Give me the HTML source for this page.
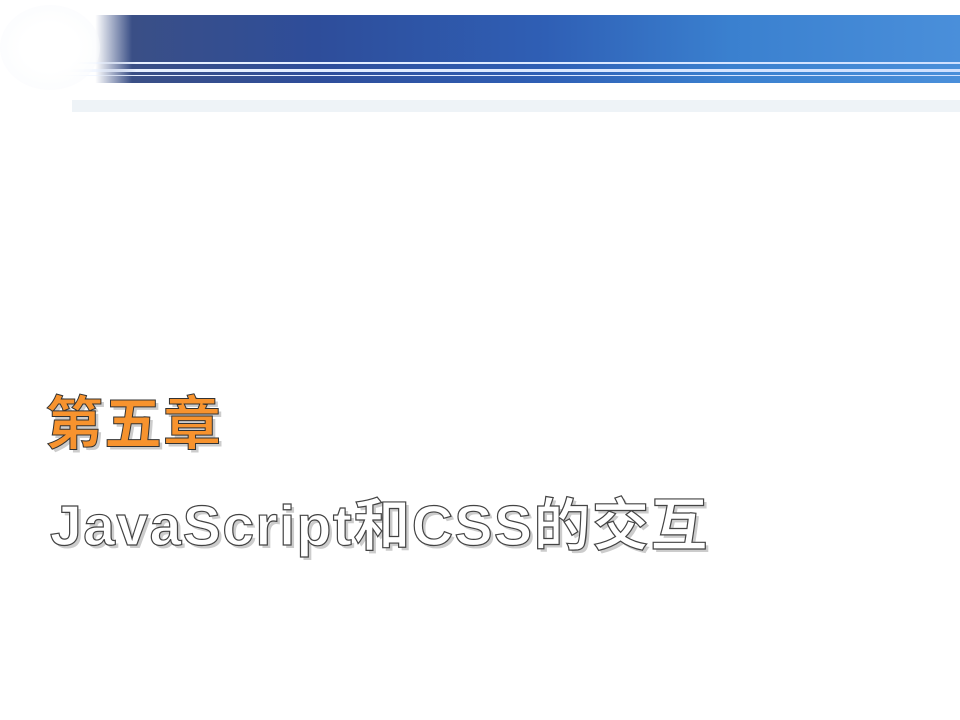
<!DOCTYPE html>
<html><head><meta charset="utf-8"><style>
body{margin:0;width:960px;height:720px;background:#fff;position:relative;overflow:hidden;font-family:"Liberation Sans","Noto Sans CJK SC",sans-serif}
.banner{position:absolute;left:40px;top:15px;width:920px;height:68px;background:linear-gradient(90deg,#fff 0%,rgba(255,255,255,0) 6%,#3a4f86 10%,#2e4d9a 30%,#2f5fb5 55%,#3a80cf 75%,#4a8fda 100%)}
.l{position:absolute;left:45px;width:915px;height:2px;background:linear-gradient(90deg,rgba(255,255,255,0),#e8f0ff 10%,#cfe0ff 100%)}
.strip{position:absolute;left:72px;top:100px;width:888px;height:12px;background:#eef3f7}
.glow{position:absolute;left:0;top:5px;width:100px;height:85px;border-radius:50%;background:radial-gradient(#fff 40%,rgba(248,250,252,.5) 70%,rgba(255,255,255,0) 100%)}
.t1{position:absolute;left:45px;top:377px;font-size:58px;font-weight:bold;color:#f7932e;letter-spacing:1px;-webkit-text-stroke:1px #333;text-shadow:3px 3px 0 #ccc}
.t2{position:absolute;left:50px;top:480px;font-size:57px;font-weight:bold;color:#fff;-webkit-text-stroke:1.2px #444;text-shadow:3px 3px 0 #ccc;letter-spacing:1.5px;white-space:nowrap}
</style></head><body>
<div class="banner"></div>
<div class="l" style="top:62px"></div>
<div class="l" style="top:69px;height:3px"></div>
<div class="l" style="top:75px;height:1px"></div>
<div class="glow"></div>
<div class="strip"></div>
<div class="t1">第五章</div>
<div class="t2">JavaScript和CSS的交互</div>
</body></html>
